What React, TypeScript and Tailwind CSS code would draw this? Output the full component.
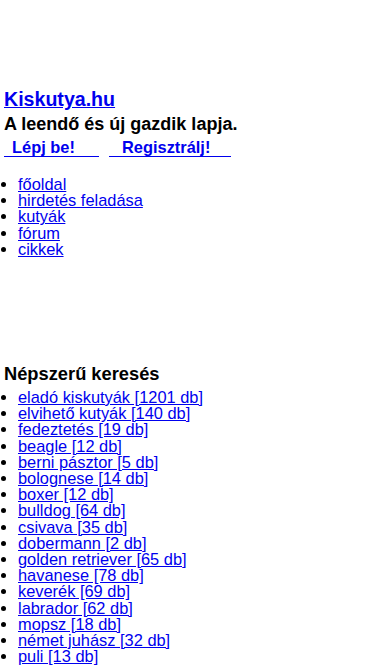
export default function App() {
  const menu = ["főoldal", "hirdetés feladása", "kutyák", "fórum", "cikkek"];
  const popular = [
    "eladó kiskutyák [1201 db]",
    "elvihető kutyák [140 db]",
    "fedeztetés [19 db]",
    "beagle [12 db]",
    "berni pásztor [5 db]",
    "bolognese [14 db]",
    "boxer [12 db]",
    "bulldog [64 db]",
    "csivava [35 db]",
    "dobermann [2 db]",
    "golden retriever [65 db]",
    "havanese [78 db]",
    "keverék [69 db]",
    "labrador [62 db]",
    "mopsz [18 db]",
    "német juhász [32 db]",
    "puli [13 db]",
  ];

  return (
    <div className="min-h-screen bg-white px-1 font-['Liberation_Sans',Arial,sans-serif] text-[16.4px] text-black">
      <div className="h-[88px]" />
      <a href="#" className="block text-[19.6px] font-bold leading-[22px] text-[#0000ee] underline">
        Kiskutya.hu
      </a>
      <p className="mt-[3px] text-[18px] font-bold leading-[22px]">A leendő és új gazdik lapja.</p>
      <div className="mt-[2px] flex text-[16.4px] font-bold leading-[20px]">
        <a href="#" className="text-[#0000ee]">
          <span className="inline-block w-[95px] border-b border-[#0000ee] pl-[8px] leading-[17px]">Lépj be!</span>
        </a>
        <a href="#" className="ml-[10px] text-[#0000ee]">
          <span className="inline-block w-[122px] border-b border-[#0000ee] pl-[13px] leading-[17px]">Regisztrálj!</span>
        </a>
      </div>
      <ul className="mt-[19px] list-disc pl-[14px] leading-[16.2px]">
        {menu.map((m) => (
          <li key={m}>
            <a href="#" className="text-[#0000ee] underline">{m}</a>
          </li>
        ))}
      </ul>
      <div className="h-[106px]" />
      <h2 className="text-[18.3px] font-bold leading-[22px]">Népszerű keresés</h2>
      <ul className="mt-[4px] list-disc pl-[14px] leading-[16.2px]">
        {popular.map((p) => (
          <li key={p}>
            <a href="#" className="text-[#0000ee] underline">{p}</a>
          </li>
        ))}
      </ul>
    </div>
  );
}
